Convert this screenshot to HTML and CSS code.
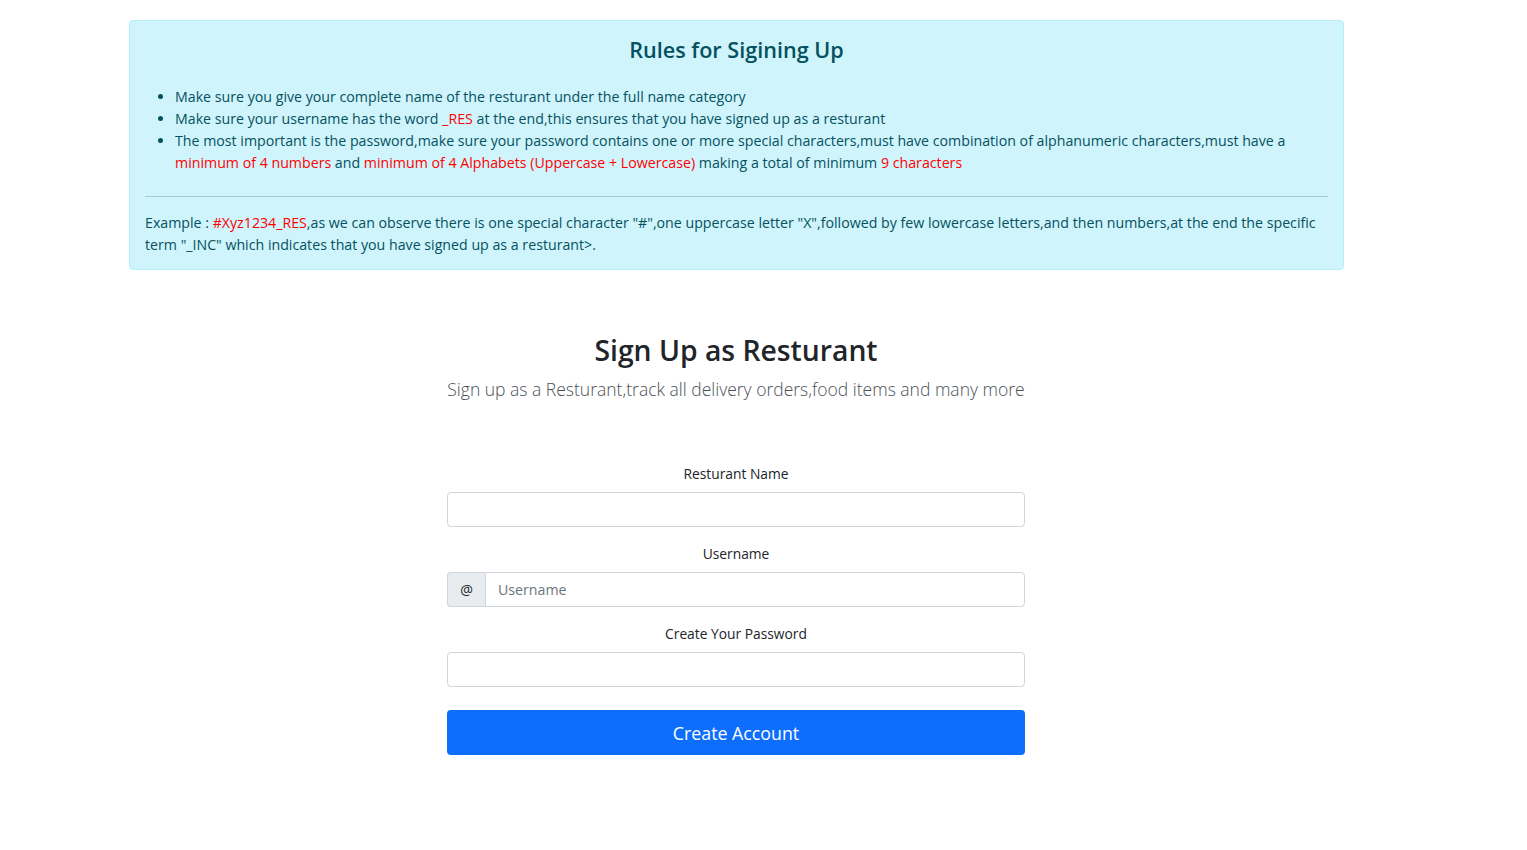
FILE: index.html
```html
<!DOCTYPE html>
<html lang="en">
<head>
<meta charset="utf-8">
<title>Sign Up as Resturant</title>
<link rel="stylesheet" href="styles.css">
</head>
<body>
<div class="page">
  <div class="alert">
    <h4 class="alert-title">Rules for Sigining Up</h4>
    <ul class="rules">
      <li>Make sure you give your complete name of the resturant under the full name category</li>
      <li>Make sure your username has the word <span class="red">_RES</span> at the end,this ensures that you have signed up as a resturant</li>
      <li>The most important is the password,make sure your password contains one or more special characters,must have combination of alphanumeric characters,must have a <span class="red">minimum of 4 numbers</span> and <span class="red">minimum of 4 Alphabets (Uppercase + Lowercase)</span> making a total of minimum <span class="red">9 characters</span></li>
    </ul>
    <hr class="divider">
    <p class="example">Example : <span class="red">#Xyz1234_RES</span>,as we can observe there is one special character "#",one uppercase letter "X",followed by few lowercase letters,and then numbers,at the end the specific term "_INC" which indicates that you have signed up as a resturant&gt;.</p>
  </div>

  <div class="signup">
    <h2 class="signup-title">Sign Up as Resturant</h2>
    <p class="lead">Sign up as a Resturant,track all delivery orders,food items and many more</p>

    <form class="form">
      <label class="label" for="rname">Resturant Name</label>
      <input class="control" id="rname" type="text">

      <label class="label" for="uname">Username</label>
      <div class="group">
        <span class="addon">@</span>
        <input class="control group-control" id="uname" type="text" placeholder="Username">
      </div>

      <label class="label" for="pwd">Create Your Password</label>
      <input class="control" id="pwd" type="password">

      <button class="btn" type="button">Create Account</button>
    </form>
  </div>
</div>
</body>
</html>
```

FILE: styles.css
```css
* { box-sizing: border-box; }

html, body {
  margin: 0;
  padding: 0;
  background: #fff;
}

body {
  font-family: "Open Sans", "Noto Sans", sans-serif;
  font-size: 14.2px;
  line-height: 22px;
  color: #212529;
}

.page {
  width: 1472px;
  padding-top: 20px;
}

.alert {
  margin: 0 128px 0 129px;
  background: #cff4fc;
  border: 1px solid #b6effb;
  border-radius: 4px;
  color: #055160;
  padding: 16px 15px 13px;
}

.alert-title {
  margin: 0 0 23px;
  text-align: center;
  font-size: 21.6px;
  font-weight: 600;
  line-height: 26px;
  color: #055160;
}

.rules {
  margin: 0;
  padding-left: 30px;
}

.red { color: #ff0000; }

.divider {
  margin: 22px 0 15px;
  border: 0;
  border-top: 1px solid #9ccfd9;
  height: 0;
}

.example { margin: 0; }

.signup {
  margin-top: 65px;
  text-align: center;
}

.signup-title {
  margin: 0;
  font-size: 28.3px;
  line-height: 31px;
  font-weight: 600;
  color: #212529;
}

.lead {
  margin: 10px 0 0;
  font-size: 17.5px;
  line-height: 27px;
  font-weight: 300;
  color: #4b5157;
}

.form {
  width: 578px;
  margin: 60px auto 0;
  display: flex;
  flex-direction: column;
  align-items: stretch;
}

.label {
  display: block;
  text-align: center;
  line-height: 22px;
  margin: 0 0 7px;
  font-size: 13.8px;
  color: #212529;
}

.control {
  display: block;
  width: 100%;
  height: 35px;
  border: 1px solid #ced4da;
  border-radius: 4px;
  padding: 0 12px;
  font: inherit;
  color: #212529;
  background: #fff;
  margin-bottom: 16px;
}

.control::placeholder { color: #6c757d; }

.group {
  display: flex;
  margin-bottom: 16px;
}

.addon {
  width: 38px;
  height: 35px;
  display: flex;
  align-items: center;
  justify-content: center;
  background: #e9ecef;
  border: 1px solid #ced4da;
  border-right: 0;
  border-radius: 4px 0 0 4px;
  color: #212529;
}

.group-control {
  flex: 1;
  width: auto;
  margin-bottom: 0;
  border-radius: 0 4px 4px 0;
}

.btn {
  margin-top: 7px;
  height: 45px;
  border: 0;
  border-radius: 4px;
  background: #0d6efd;
  color: #fff;
  font-family: inherit;
  font-size: 17.8px;
  cursor: pointer;
}
```
